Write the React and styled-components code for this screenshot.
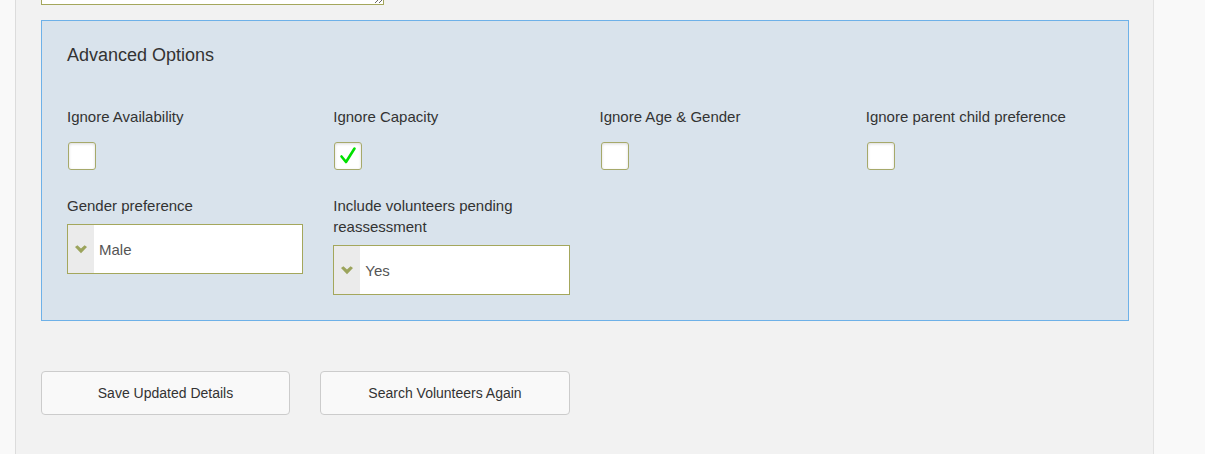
import styled, { createGlobalStyle } from 'styled-components'

const GlobalStyle = createGlobalStyle`
  html, body {
    margin: 0;
    padding: 0;
    background: #f9f9f9;
    font-family: "Liberation Sans", Arial, sans-serif;
    color: #333;
  }
`

const Page = styled.div`
  display: flex;
  min-height: 454px;
  overflow: hidden;
`

const Gutter = styled.div`
  width: ${({ $w }) => $w};
  flex: ${({ $grow }) => ($grow ? 1 : 'none')};
  background: #f9f9f9;
`

const Main = styled.main`
  width: 1088px;
  padding: 0 24px 40px 25px;
  background: #f2f2f2;
  border-left: 1px solid #dcdcdc;
  border-right: 1px solid #e2e2e2;
`

const Notes = styled.textarea`
  display: block;
  box-sizing: border-box;
  width: 343px;
  height: 45px;
  margin: -40px 0 15px 0;
  border: 1px solid #a4a75c;
  background: #fff;
  resize: vertical;
`

const Panel = styled.section`
  background: #d9e3ec;
  border: 1px solid #6eb1e8;
  padding: 24px 11px 25px 10px;
`

const Title = styled.h4`
  margin: 0 15px 41px;
  font-size: 18px;
  line-height: 20px;
  font-weight: normal;
  color: #333;
`

const Row = styled.div`
  display: grid;
  grid-template-columns: repeat(4, 1fr);
  align-items: start;
  margin-bottom: ${({ $mb }) => $mb || 0}px;
`

const Field = styled.div`
  padding: 0 15px;
`

const Label = styled.label`
  display: block;
  font-size: 15px;
  line-height: 21px;
  color: #333;
  margin-bottom: ${({ $mb }) => $mb}px;
`

const Box = styled.span`
  display: flex;
  align-items: center;
  justify-content: center;
  box-sizing: border-box;
  width: 28px;
  height: 28px;
  margin-left: 1px;
  background: #fff;
  border: 1px solid #a6a96a;
  border-radius: 3px;
  box-shadow: inset 0 1px 3px rgba(0, 0, 0, 0.15);
`

const Select = styled.div`
  display: flex;
  box-sizing: border-box;
  height: 50px;
  border: 1px solid #a4a75c;
  background: #fff;
`

const Addon = styled.span`
  display: flex;
  align-items: center;
  justify-content: center;
  width: 26px;
  background: #ebebeb;
`

const Value = styled.span`
  display: flex;
  align-items: center;
  padding-left: 5px;
  font-size: 15px;
  color: #555;
`

const Actions = styled.div`
  display: flex;
  gap: 30px;
  margin-top: 50px;
`

const Button = styled.button`
  box-sizing: border-box;
  width: ${({ $w }) => $w}px;
  height: 44px;
  background: #f9f9f9;
  border: 1px solid #cccccc;
  border-radius: 4px;
  font-family: "Liberation Sans", Arial, sans-serif;
  font-size: 14px;
  color: #333;
`

function Checkbox({ checked }) {
  return (
    <Box>
      {checked && (
        <svg width="20" height="20" viewBox="0 0 20 20">
          <path d="M3.5 10.5 L8 16 L16.5 2.5" fill="none" stroke="#00e000" strokeWidth="2.6" strokeLinecap="round" strokeLinejoin="round" />
        </svg>
      )}
    </Box>
  )
}

function Dropdown({ value }) {
  return (
    <Select>
      <Addon>
        <svg width="12" height="9" viewBox="0 0 11 8">
          <path d="M0 1.8 L2.2 0 L5.5 3 L8.8 0 L11 1.8 L5.5 7.5 Z" fill="#9ca45c" />
        </svg>
      </Addon>
      <Value>{value}</Value>
    </Select>
  )
}

const checks = [
  { label: 'Ignore Availability', checked: false },
  { label: 'Ignore Capacity', checked: true },
  { label: 'Ignore Age & Gender', checked: false },
  { label: 'Ignore parent child preference', checked: false },
]

export default function App() {
  return (
    <>
      <GlobalStyle />
      <Page>
        <Gutter $w="15px" />
        <Main>
          <Notes />
          <Panel>
            <Title>Advanced Options</Title>
            <Row $mb={25}>
              {checks.map((c) => (
                <Field key={c.label}>
                  <Label $mb={15}>{c.label}</Label>
                  <Checkbox checked={c.checked} />
                </Field>
              ))}
            </Row>
            <Row>
              <Field>
                <Label $mb={8}>Gender preference</Label>
                <Dropdown value="Male" />
              </Field>
              <Field>
                <Label $mb={8}>Include volunteers pending reassessment</Label>
                <Dropdown value="Yes" />
              </Field>
            </Row>
          </Panel>
          <Actions>
            <Button $w={249}>Save Updated Details</Button>
            <Button $w={250}>Search Volunteers Again</Button>
          </Actions>
        </Main>
        <Gutter $grow />
      </Page>
    </>
  )
}
